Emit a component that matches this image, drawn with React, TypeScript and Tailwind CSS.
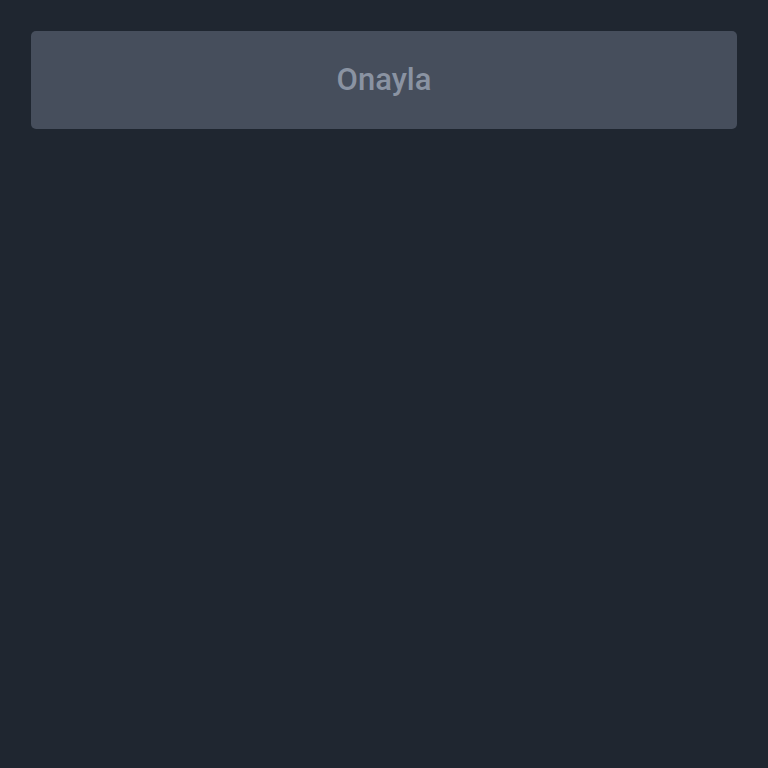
export default function App() {
  return (
    <div className="min-h-screen w-full bg-[#1f2630] p-[31px]" style={{ fontFamily: 'Roboto, "Noto Sans", sans-serif' }}>
      <button className="flex h-[98px] w-full items-center justify-center rounded-[5px] bg-[#464e5c] text-[31px] font-medium text-[#8a93a2]">
        Onayla
      </button>
    </div>
  );
}
